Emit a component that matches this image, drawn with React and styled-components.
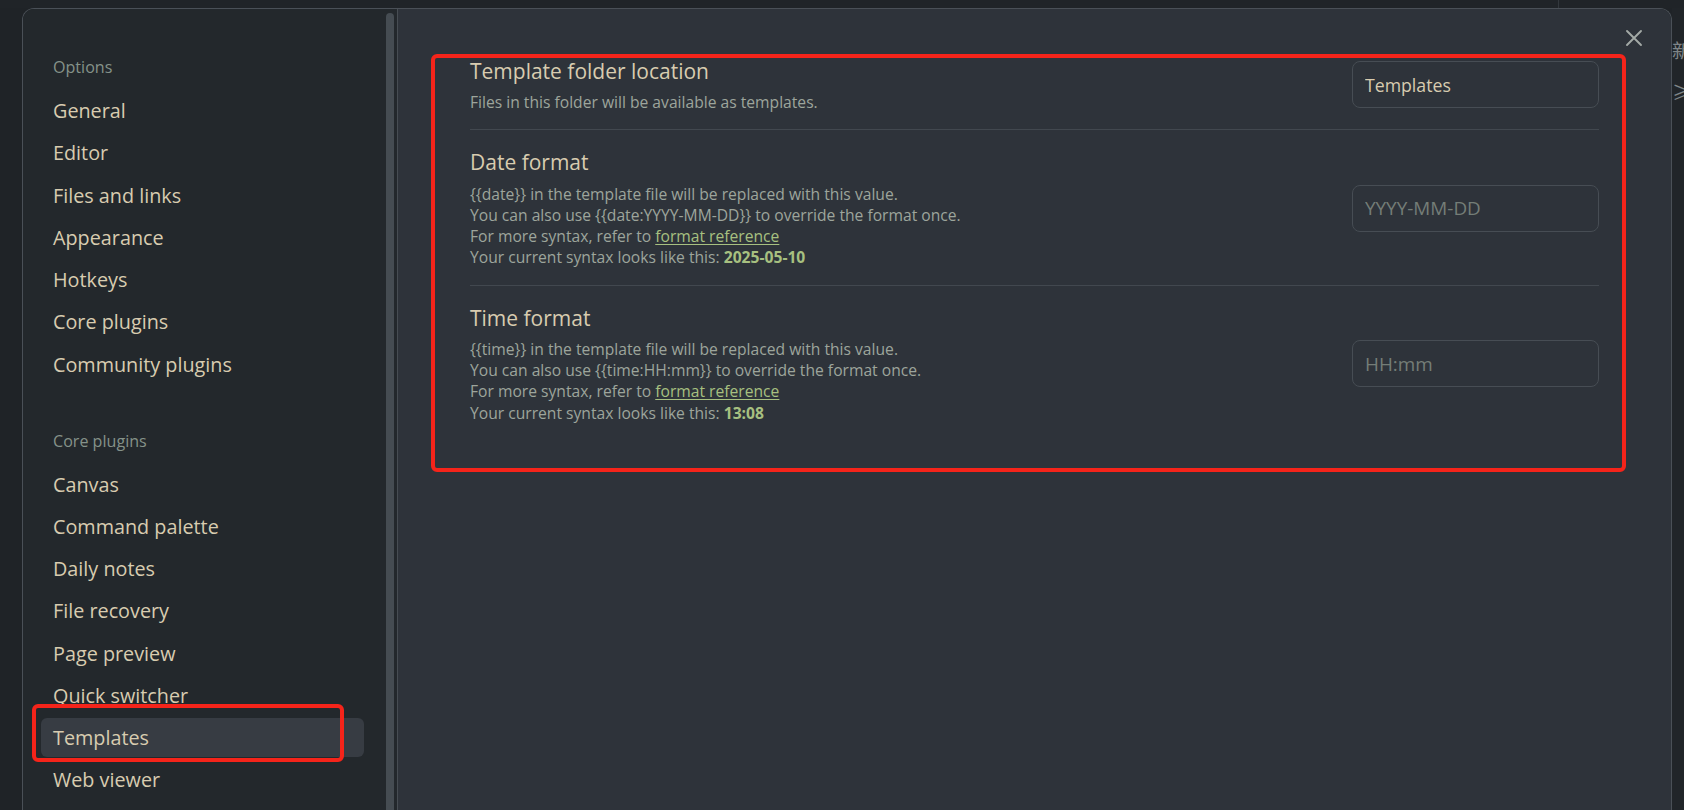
import React from "react";
import styled, { createGlobalStyle } from "styled-components";

const Global = createGlobalStyle`
  html, body { margin: 0; padding: 0; background: #1f2327; overflow: hidden; }
  body { font-family: "Open Sans", "Noto Sans", sans-serif; }
  * { box-sizing: border-box; }
`;

const Page = styled.div`
  position: relative;
  width: 1684px;
  height: 810px;
  overflow: hidden;
  background: #1f2327;
  display: grid;
  grid-template-columns: 22px 1650px 1fr;
  grid-template-rows: 8px 1fr;
`;

const TopBar = styled.div`
  grid-column: 1 / -1;
  background: #202428;
  display: grid;
  grid-template-columns: 1558px 1px 1fr;
`;

const TopDivider = styled.div`
  grid-column: 2;
  background: #33383d;
`;

const LeftGutter = styled.div`
  background: #1f2327;
`;

const RightGutter = styled.div`
  background: #212529;
  overflow: hidden;
  display: flex;
  flex-direction: column;
  padding-top: 30px;
  gap: 18px;
  color: #7f8588;
  font-family: "Noto Sans CJK SC", sans-serif;
  font-size: 19px;
  line-height: 24px;
  white-space: nowrap;
`;

const Modal = styled.div`
  position: relative;
  height: 840px;
  border: 1px solid #4a5057;
  border-bottom: none;
  border-radius: 12px 12px 0 0;
  overflow: hidden;
  display: grid;
  grid-template-columns: 375px 1fr;
`;

const Sidebar = styled.aside`
  background: #23282c;
  border-right: 1px solid #474d53;
  display: grid;
  grid-template-columns: 1fr 8px;
  padding-right: 3px;
`;

const Nav = styled.nav`
  padding: 48.2px 22px 0 18px;
  display: flex;
  flex-direction: column;
`;

const NavHeader = styled.div`
  height: 20px;
  line-height: 20px;
  padding-left: 12px;
  font-size: 16.1px;
  color: #859289;
  margin-top: ${(p) => (p.$first ? "0" : "47px")};
  margin-bottom: 14px;
`;

const NavList = styled.div`
  display: flex;
  flex-direction: column;
  gap: 3.25px;
`;

const NavItem = styled.div`
  height: 39px;
  line-height: 39px;
  padding-left: 12px;
  border-radius: 6px;
  font-size: 19.8px;
  color: #d8ccb0;
  background: ${(p) => (p.$active ? "#373c43" : "transparent")};
  white-space: nowrap;
`;

const ScrollThumb = styled.div`
  margin-top: 4px;
  background: #454c52;
  border-radius: 4px;
`;

const Content = styled.main`
  background: #2e333a;
  padding: 29.5px 72px 0 72px;
`;

const CloseButton = styled.button`
  position: absolute;
  top: 20px;
  right: 28px;
  width: 18px;
  height: 18px;
  padding: 0;
  border: none;
  background: transparent;
  color: #a3aaa6;
  display: flex;
  align-items: center;
  justify-content: center;
`;

const SettingItem = styled.div`
  display: flex;
  align-items: center;
  gap: 40px;
  padding: 18px 0 16px;
  border-top: ${(p) => (p.$first ? "none" : "1px solid #42484f")};
`;

const Info = styled.div`
  flex: 1;
  display: flex;
  flex-direction: column;
  gap: 7.5px;
`;

const Name = styled.div`
  font-size: 21px;
  line-height: 28px;
  color: #d8ccb0;
`;

const Desc = styled.div`
  font-size: 15.65px;
  line-height: 21.2px;
  color: #9da59c;
`;

const Link = styled.a`
  color: #a7c080;
  text-decoration: underline;
  text-underline-offset: 2px;
`;

const Value = styled.b`
  color: #a7c080;
  font-weight: 700;
`;

const TextInput = styled.input`
  flex: none;
  width: 247px;
  height: 47px;
  padding: 0 12px;
  border: 1px solid #474d54;
  border-radius: 8px;
  background: #2e333a;
  color: #d8ccb0;
  font-family: "Open Sans", "Noto Sans", sans-serif;
  font-size: 17.7px;
  outline: none;
  &::placeholder {
    color: #747d77;
    font-size: 18.9px;
  }
`;

const Annotation = styled.div`
  position: absolute;
  border: 4px solid #f5241a;
  border-radius: 6px;
  pointer-events: none;
`;

const optionItems = [
  "General",
  "Editor",
  "Files and links",
  "Appearance",
  "Hotkeys",
  "Core plugins",
  "Community plugins",
];

const coreItems = [
  "Canvas",
  "Command palette",
  "Daily notes",
  "File recovery",
  "Page preview",
  "Quick switcher",
  "Templates",
  "Web viewer",
];

export default function App() {
  return (
    <>
      <Global />
      <Page>
        <TopBar>
          <TopDivider />
        </TopBar>
        <LeftGutter />
        <Modal>
          <Sidebar>
            <Nav>
              <NavHeader $first>Options</NavHeader>
              <NavList>
                {optionItems.map((t) => (
                  <NavItem key={t}>{t}</NavItem>
                ))}
              </NavList>
              <NavHeader>Core plugins</NavHeader>
              <NavList>
                {coreItems.map((t) => (
                  <NavItem key={t} $active={t === "Templates"}>
                    {t}
                  </NavItem>
                ))}
              </NavList>
            </Nav>
            <ScrollThumb />
          </Sidebar>
          <Content>
            <SettingItem $first>
              <Info>
                <Name>Template folder location</Name>
                <Desc>Files in this folder will be available as templates.</Desc>
              </Info>
              <TextInput readOnly value="Templates" />
            </SettingItem>
            <SettingItem>
              <Info>
                <Name>Date format</Name>
                <Desc>
                  {"{{date}} in the template file will be replaced with this value."}
                  <br />
                  {"You can also use {{date:YYYY-MM-DD}} to override the format once."}
                  <br />
                  For more syntax, refer to <Link>format reference</Link>
                  <br />
                  Your current syntax looks like this: <Value>2025-05-10</Value>
                </Desc>
              </Info>
              <TextInput readOnly placeholder="YYYY-MM-DD" />
            </SettingItem>
            <SettingItem>
              <Info>
                <Name>Time format</Name>
                <Desc>
                  {"{{time}} in the template file will be replaced with this value."}
                  <br />
                  {"You can also use {{time:HH:mm}} to override the format once."}
                  <br />
                  For more syntax, refer to <Link>format reference</Link>
                  <br />
                  Your current syntax looks like this: <Value>13:08</Value>
                </Desc>
              </Info>
              <TextInput readOnly placeholder="HH:mm" />
            </SettingItem>
          </Content>
          <CloseButton aria-label="Close">
            <svg width="18" height="18" viewBox="0 0 18 18" fill="none">
              <path d="M2 2 L16 16 M16 2 L2 16" stroke="currentColor" strokeWidth="1.9" strokeLinecap="round" />
            </svg>
          </CloseButton>
        </Modal>
        <RightGutter>
          <span>新</span>
          <span>≥</span>
        </RightGutter>
        <Annotation style={{ left: 431, top: 54, width: 1195, height: 418 }} />
        <Annotation style={{ left: 32, top: 704, width: 312, height: 58 }} />
      </Page>
    </>
  );
}
